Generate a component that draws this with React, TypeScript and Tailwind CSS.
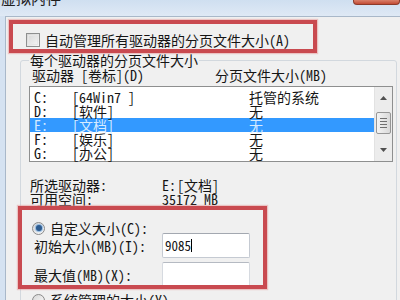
import React from "react";

function Arrow({ up }: { up?: boolean }) {
  return (
    <svg width="7" height="4" viewBox="0 0 7 4">
      {up ? <polygon points="0,4 7,4 3.5,0" fill="#505050" /> : <polygon points="0,0 7,0 3.5,4" fill="#505050" />}
    </svg>
  );
}

function Radio({ checked }: { checked?: boolean }) {
  return (
    <div className="w-[13px] h-[13px] shrink-0 rounded-full border border-[#8a8a8a] bg-gradient-to-br from-[#d8d8d8] to-[#fafafa] flex items-center justify-center">
      {checked && <div className="w-[6px] h-[6px] rounded-full bg-[#2d5b8f] shadow-[0_0_1px_1px_rgba(120,170,220,0.8)]" />}
    </div>
  );
}

const rows = [
  { d: "C:", l: "[64Win7 ]", s: "托管的系统" },
  { d: "D:", l: "[软件]", s: "无" },
  { d: "E:", l: "[文档]", s: "无", sel: true },
  { d: "F:", l: "[娱乐]", s: "无" },
  { d: "G:", l: "[办公]", s: "无" },
];

export default function App() {
  return (
    <div className="w-[400px] h-[300px] overflow-hidden flex flex-col bg-[#dce7f3] text-[14px] leading-[14px] text-[#151515] [font-family:'Noto_Sans_Mono_CJK_SC','Noto_Sans_CJK_SC',sans-serif]">
      {/* title bar */}
      <div className="h-[16px] shrink-0 flex justify-between items-start bg-gradient-to-b from-[#cfdff0] to-[#dfe9f5] overflow-hidden">
        <div className="-mt-[10px] ml-[1px] text-[15px] leading-[16px] text-[#1e1e1e]">虚拟内存</div>
        <div className="w-[47px] h-[5px] rounded-b-[4px] border border-t-0 border-[#8c3b2a] bg-gradient-to-b from-[#d9806a] to-[#c24b34]" />
      </div>
      <div className="flex flex-1 min-h-0">
        <div className="w-[5px] shrink-0 bg-[#d5e2f1]" />
        <div className="flex-1 min-w-0 border-l border-t border-[#a9b8c9] bg-[#f0f0f0] flex flex-col">
          {/* red box 1 */}
          <div className="relative z-10 ml-[3px] mt-[3px] w-[308px] h-[33px] shrink-0 border-[4px] border-[#c94a50] shadow-[0_0_1px_1px_rgba(230,150,150,0.5)]">
            <div className="flex items-center h-full pt-[6px] pl-[13px]">
              <div className="w-[14px] h-[14px] shrink-0 border border-[#8e8f8f] bg-gradient-to-br from-[#d6d6d6] to-[#f6f6f6] p-[1px]">
                <div className="w-full h-full border border-[#e6e6e6]" />
              </div>
              <span className="ml-[5px] whitespace-nowrap">自动管理所有驱动器的分页文件大小(A)</span>
            </div>
          </div>
          {/* group box */}
          <div className="ml-[14px] mt-[7px] w-[377px] h-[300px] shrink-0 border border-[#d2d8de] rounded-[3px] flex flex-col">
            <div className="-mt-[8px] ml-[8px] px-[1px] bg-[#f0f0f0] w-fit h-[15px] leading-[15px] whitespace-nowrap">每个驱动器的分页文件大小</div>
            <div className="h-[15px] leading-[15px] flex pl-[11px] whitespace-nowrap">
              <span className="w-[183px] shrink-0">驱动器 [卷标](D)</span>
              <span>分页文件大小(MB)</span>
            </div>
            {/* list */}
            <div className="mt-[3px] ml-[8px] w-[364px] h-[76px] shrink-0 border border-[#8e8f8f] bg-white flex">
              <div className="flex-1 min-w-0 pt-[3px]">
                {rows.map((r) => (
                  <div key={r.d} className={"h-[14px] leading-[14px] flex whitespace-nowrap " + (r.sel ? "bg-[#3399ff] text-[#d6ebff]" : "")}>
                    <span className="pl-[4px] w-[42px] shrink-0">{r.d}</span>
                    <span className="w-[177px] shrink-0">{r.l}</span>
                    <span>{r.s}</span>
                  </div>
                ))}
              </div>
              <div className="w-[18px] shrink-0 bg-[#ececec] border-l border-[#e2e2e2] flex flex-col">
                <div className="h-[22px] flex items-center justify-center"><Arrow up /></div>
                <div className="mt-[3px] h-[22px] mx-[1px] border border-[#969696] rounded-[2px] bg-gradient-to-r from-[#f4f4f4] to-[#d9d9d9] flex flex-col items-center justify-center gap-[2px]">
                  <div className="w-[7px] h-[1px] bg-[#707070]" />
                  <div className="w-[7px] h-[1px] bg-[#707070]" />
                  <div className="w-[7px] h-[1px] bg-[#707070]" />
                  <div className="w-[7px] h-[1px] bg-[#707070]" />
                </div>
                <div className="flex-1" />
                <div className="h-[22px] flex items-center justify-center"><Arrow /></div>
              </div>
            </div>
            {/* info */}
            <div className="mt-[16px] h-[14px] flex pl-[9px] whitespace-nowrap">
              <span className="w-[132px] shrink-0">所选驱动器:</span>
              <span>E:</span>
              <span className="ml-[1px]">[文档]</span>
            </div>
            <div className="h-[14px] flex pl-[9px] whitespace-nowrap">
              <span className="w-[132px] shrink-0">可用空间:</span>
              <span>35172 MB</span>
            </div>
            {/* red box 2 */}
            <div className="relative z-10 -ml-[3px] w-[249px] h-[83px] shrink-0 border-[4px] border-[#c94a50] overflow-hidden shadow-[0_0_1px_1px_rgba(230,150,150,0.5)]">
              <div className="mt-[11px] h-[14px] flex items-center pl-[10px] whitespace-nowrap">
                <Radio checked />
                <span className="ml-[5px]">自定义大小(C):</span>
              </div>
              <div className="-mt-[2px] h-[25px] flex items-center pl-[12px] whitespace-nowrap">
                <span className="w-[128px] shrink-0">初始大小(MB)(I):</span>
                <div className="w-[88px] h-[25px] shrink-0 bg-white border border-[#c5cad2] border-t-[#a3a8b0] rounded-[2px] flex items-center pl-[2px] text-[13px]">
                  <span>9085</span>
                  <div className="w-[1px] h-[13px] bg-black" />
                </div>
              </div>
              <div className="mt-[4px] h-[25px] flex items-center pl-[12px] whitespace-nowrap">
                <span className="w-[128px] shrink-0">最大值(MB)(X):</span>
                <div className="w-[88px] h-[25px] shrink-0 bg-white border border-[#d6dae0] border-t-[#b5bac2] rounded-[2px]" />
              </div>
            </div>
            <div className="mt-[4px] h-[14px] flex items-center pl-[11px] whitespace-nowrap">
              <Radio />
              <span className="ml-[5px]">系统管理的大小(Y)</span>
            </div>
          </div>
        </div>
      </div>
    </div>
  );
}
